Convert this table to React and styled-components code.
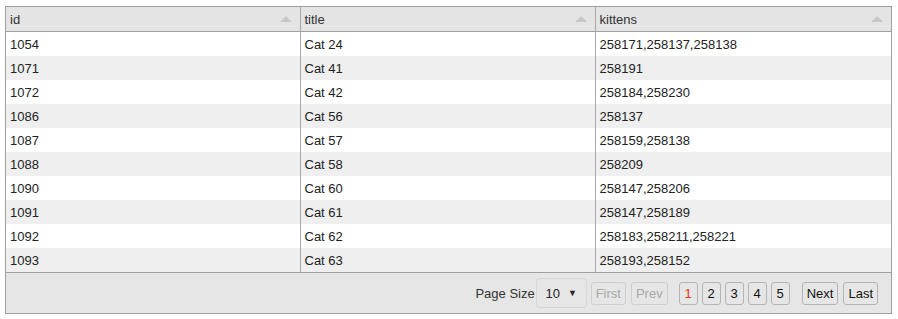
import React from "react";
import styled, { createGlobalStyle } from "styled-components";

const GlobalStyle = createGlobalStyle`
  html, body {
    margin: 0;
    padding: 0;
    background: #fff;
  }
  body {
    font-family: "Liberation Sans", Arial, sans-serif;
  }
`;

const Page = styled.div`
  padding: 6px 6px 0 5px;
`;

const Grid = styled.div`
  border: 1px solid #a0a0a0;
  width: 885px;
`;

const Table = styled.table`
  width: 100%;
  border-collapse: collapse;
  table-layout: fixed;
  font-size: 13px;
  color: #222;
`;

const HeadCell = styled.th`
  height: 24px;
  padding: 0 4px;
  text-align: left;
  font-weight: normal;
  color: #333;
  background: #e4e4e4;
  border-bottom: 1px solid #a0a0a0;
  border-left: 1px solid #a8a8a8;
  &:first-child {
    border-left: none;
  }
`;

const HeadInner = styled.div`
  display: flex;
  align-items: center;
  justify-content: space-between;
`;

const SortArrow = styled.span`
  width: 0;
  height: 0;
  margin-right: 4px;
  border-left: 6px solid transparent;
  border-right: 6px solid transparent;
  border-bottom: 6px solid #c8c8c8;
`;

const Row = styled.tr`
  background: ${({ $odd }) => ($odd ? "#efefef" : "#fff")};
`;

const Cell = styled.td`
  height: 24px;
  padding: 0 4px;
  border-left: 1px solid #a8a8a8;
  white-space: nowrap;
  &:first-child {
    border-left: none;
  }
`;

const Footer = styled.div`
  display: flex;
  align-items: center;
  justify-content: flex-end;
  height: 40px;
  padding-right: 13px;
  background: #e6e6e6;
  border-top: 1px solid #a0a0a0;
  font-size: 13px;
  color: #333;
`;

const SizeLabel = styled.span`
  margin-right: 1px;
`;

const SizeSelect = styled.div`
  display: flex;
  align-items: center;
  justify-content: center;
  gap: 8px;
  width: 51px;
  height: 30px;
  box-sizing: border-box;
  border: 1px solid #d6d6d6;
  border-radius: 4px;
  margin-right: 4px;
  color: #222;
  font-size: 13px;
`;

const Caret = styled.span`
  font-size: 9px;
  color: #222;
`;

const NavGroup = styled.div`
  display: flex;
  gap: ${({ $gap }) => $gap}px;
  margin-left: ${({ $left }) => $left || 0}px;
`;

const PagerButton = styled.button`
  height: 23px;
  min-width: 19px;
  padding: 0 4px;
  font-family: "Liberation Sans", Arial, sans-serif;
  font-size: 13px;
  background: #e6e6e6;
  border: 1px solid ${({ $disabled }) => ($disabled ? "#cfcfcf" : "#b4b4b4")};
  border-radius: 3px;
  color: ${({ $disabled, $active }) =>
    $disabled ? "#a8a8a8" : $active ? "#e8340c" : "#111"};
  line-height: 21px;
`;

const rows = [
  ["1054", "Cat 24", "258171,258137,258138"],
  ["1071", "Cat 41", "258191"],
  ["1072", "Cat 42", "258184,258230"],
  ["1086", "Cat 56", "258137"],
  ["1087", "Cat 57", "258159,258138"],
  ["1088", "Cat 58", "258209"],
  ["1090", "Cat 60", "258147,258206"],
  ["1091", "Cat 61", "258147,258189"],
  ["1092", "Cat 62", "258183,258211,258221"],
  ["1093", "Cat 63", "258193,258152"],
];

const columns = ["id", "title", "kittens"];

export default function App() {
  return (
    <Page>
      <GlobalStyle />
      <Grid>
        <Table>
          <colgroup>
            <col style={{ width: 294 }} />
            <col style={{ width: 295 }} />
            <col />
          </colgroup>
          <thead>
            <tr>
              {columns.map((c) => (
                <HeadCell key={c}>
                  <HeadInner>
                    <span>{c}</span>
                    <SortArrow />
                  </HeadInner>
                </HeadCell>
              ))}
            </tr>
          </thead>
          <tbody>
            {rows.map((r, i) => (
              <Row key={r[0]} $odd={i % 2 === 1}>
                {r.map((v, j) => (
                  <Cell key={j}>{v}</Cell>
                ))}
              </Row>
            ))}
          </tbody>
        </Table>
        <Footer>
          <SizeLabel>Page Size</SizeLabel>
          <SizeSelect>
            <span>10</span>
            <Caret>▼</Caret>
          </SizeSelect>
          <NavGroup $gap={5}>
            <PagerButton $disabled>First</PagerButton>
            <PagerButton $disabled>Prev</PagerButton>
          </NavGroup>
          <NavGroup $gap={4} $left={11}>
            {[1, 2, 3, 4, 5].map((n) => (
              <PagerButton key={n} $active={n === 1}>
                {n}
              </PagerButton>
            ))}
          </NavGroup>
          <NavGroup $gap={5} $left={12}>
            <PagerButton>Next</PagerButton>
            <PagerButton>Last</PagerButton>
          </NavGroup>
        </Footer>
      </Grid>
    </Page>
  );
}
